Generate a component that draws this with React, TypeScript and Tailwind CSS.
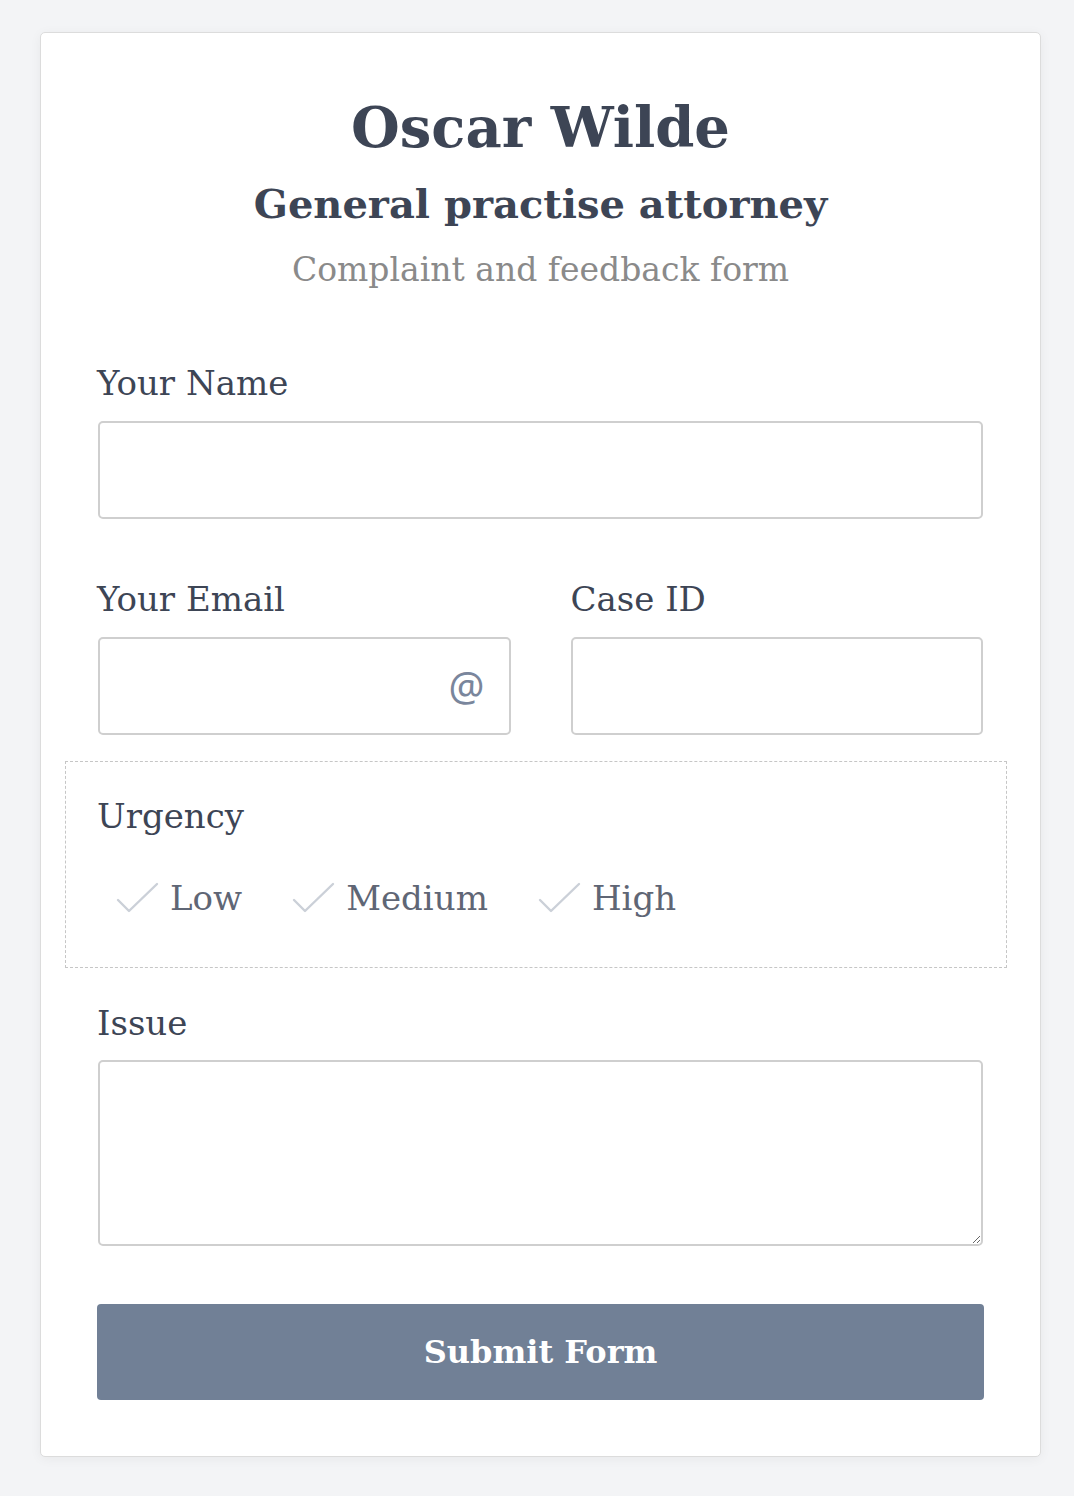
import React from "react";

const serif = { fontFamily: '"DejaVu Serif", "Liberation Serif", serif' };

const CheckMark = () => (
  <svg width="44" height="32" viewBox="0 0 44 32" fill="none" aria-hidden="true">
    <path d="M2 18 L13 29 L41 2" stroke="#cbd0d8" strokeWidth="2.4" strokeLinecap="round" strokeLinejoin="round" />
  </svg>
);

const Label = ({ children }: { children: React.ReactNode }) => (
  <label className="block text-[34px] leading-[40px] text-[#3d4555]">{children}</label>
);

export default function App() {
  const levels = ["Low", "Medium", "High"];

  return (
    <div className="min-h-screen bg-[#f3f4f6] px-10 pt-8 pb-10" style={serif}>
      <div className="w-[1001px] rounded-[5px] border border-[#dcdcdc] bg-white px-[56px] pt-[56px] pb-[56px] shadow-[0_2px_12px_rgba(0,0,0,0.05)]">
        <header className="text-center">
          <h1 className="text-[56px] font-bold leading-[76px] text-[#3d4555]">Oscar Wilde</h1>
          <h2 className="mt-[8px] text-[40px] font-bold leading-[62px] text-[#3d4555]">General practise attorney</h2>
          <p className="mt-[4px] text-[33px] leading-[62px] text-[#8a8a8a]">Complaint and feedback form</p>
        </header>

        <form className="mt-[62px]" onSubmit={(e) => e.preventDefault()}>
          <div>
            <Label>Your Name</Label>
            <input type="text" className="ml-[1px] mt-[18px] block h-[98px] w-[885px] rounded-[5px] border-2 border-[#cfcfcf] bg-white px-4 text-[28px] outline-none" />
          </div>

          <div className="mt-[60px] grid grid-cols-2 gap-[60px]">
            <div>
              <Label>Your Email</Label>
              <div className="relative mt-[18px] ml-[1px]">
                <input type="email" className="block h-[98px] w-full rounded-[5px] border-2 border-[#cfcfcf] bg-white px-4 pr-16 text-[28px] outline-none" />
                <span className="absolute right-[26px] top-1/2 -translate-y-1/2 text-[40px] leading-none text-[#7a869c]" style={{ fontFamily: '"Noto Sans", sans-serif' }}>
                  @
                </span>
              </div>
            </div>
            <div>
              <Label>Case ID</Label>
              <input type="text" className="mt-[18px] block h-[98px] w-[412px] rounded-[5px] border-2 border-[#cfcfcf] bg-white px-4 text-[28px] outline-none" />
            </div>
          </div>

          <fieldset className="mt-[26px] ml-[-32px] mr-[-23px] h-[207px] border border-dashed border-[#c6c6c6] pl-[31px] pt-[34px]">
            <Label>Urgency</Label>
            <div className="mt-[42px] flex items-center gap-[50px] pl-[19px]">
              {levels.map((lvl) => (
                <div key={lvl} className="flex items-center gap-[10px]">
                  <CheckMark />
                  <span className="text-[34px] leading-[40px] text-[#5f6675]">{lvl}</span>
                </div>
              ))}
            </div>
          </fieldset>

          <div className="mt-[35px]">
            <Label>Issue</Label>
            <textarea className="ml-[1px] mt-[17px] block h-[186px] w-[885px] rounded-[5px] border-2 border-[#cfcfcf] bg-white px-4 py-3 text-[28px] outline-none" />
          </div>

          <button type="submit" className="mt-[58px] block h-[96px] w-full rounded-[4px] bg-[#718096] text-[32px] font-bold text-white">
            Submit Form
          </button>
        </form>
      </div>
    </div>
  );
}
